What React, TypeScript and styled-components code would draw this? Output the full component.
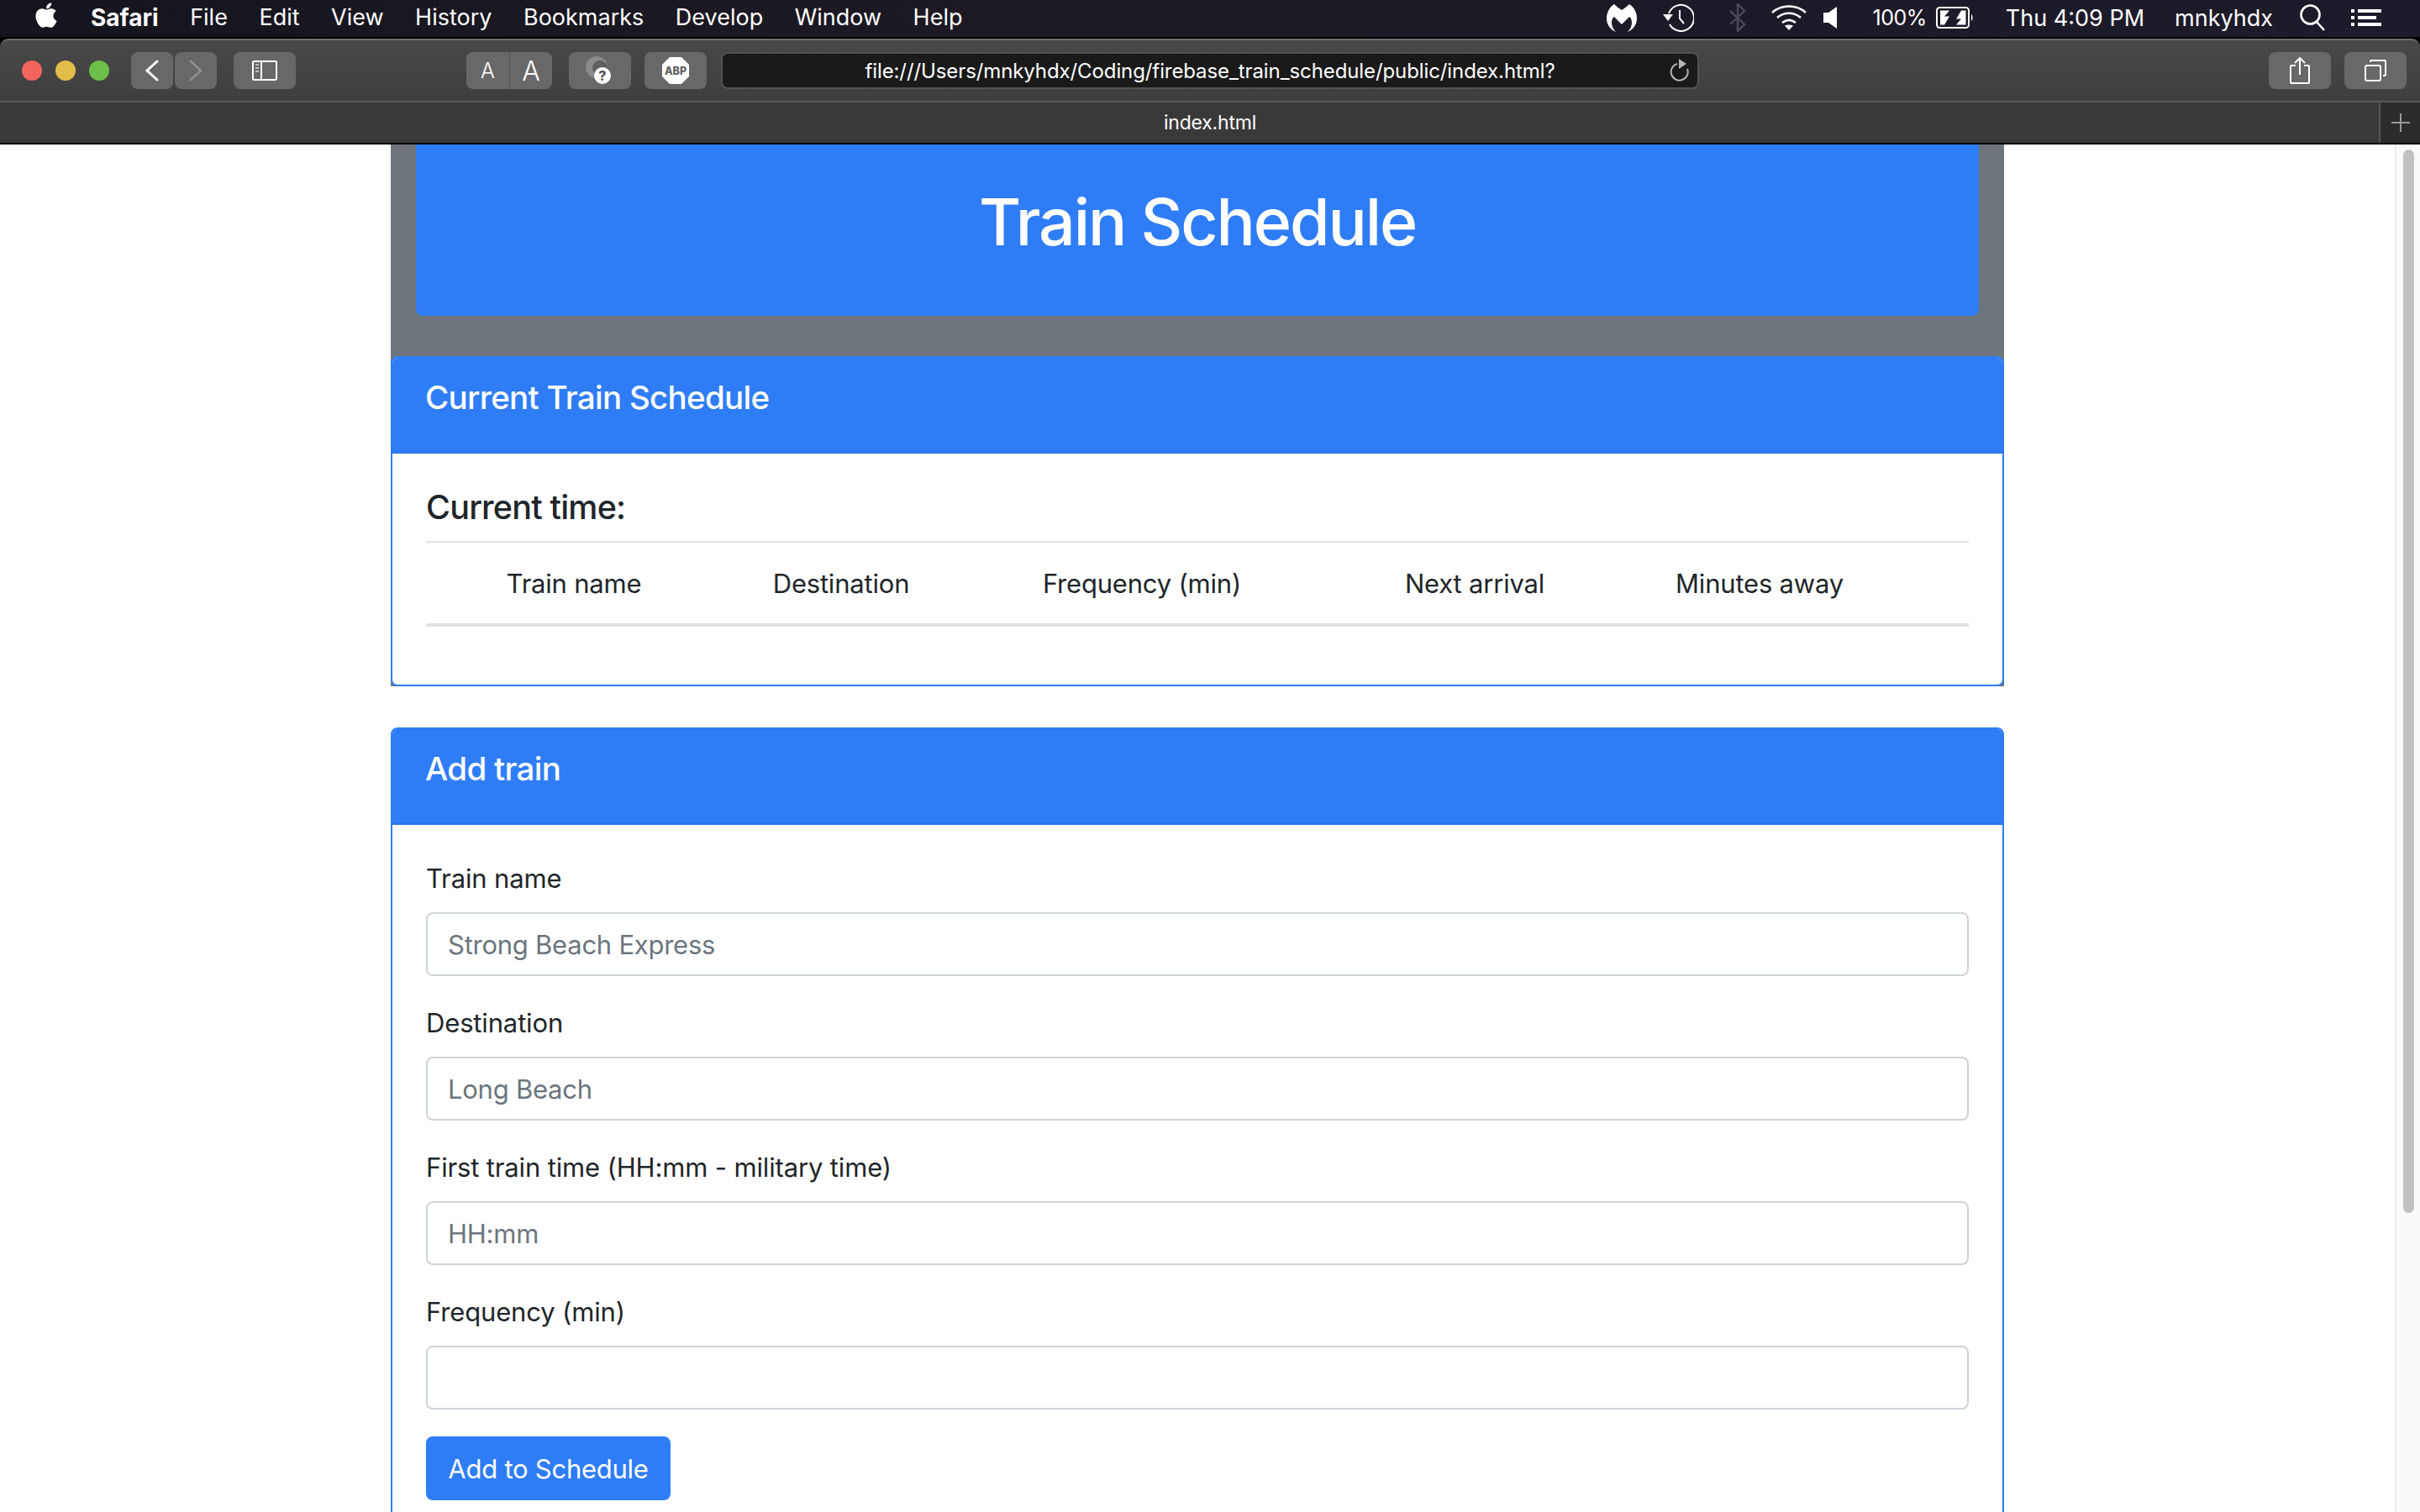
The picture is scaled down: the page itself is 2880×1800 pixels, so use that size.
import React from "react";
import styled, { createGlobalStyle } from "styled-components";
import { FaApple } from "react-icons/fa";

const GlobalStyle = createGlobalStyle`
  html, body {
    margin: 0;
    padding: 0;
    background: #fff;
    overflow: hidden;
  }
  * {
    box-sizing: border-box;
  }
`;

const Screen = styled.div`
  width: 2880px;
  height: 1800px;
  display: flex;
  flex-direction: column;
  overflow: hidden;
  font-family: Inter, "Liberation Sans", sans-serif;
  color: #212529;
  background: #000;
`;

/* mac menu bar */
const MenuBar = styled.div`
  height: 46px;
  flex: none;
  display: flex;
  align-items: center;
  padding: 0 46px 2px 42px;
  color: #fff;
  font-size: 27px;
  background: linear-gradient(90deg, #15151d, #1e1a24 45%, #1c1b2b);
  border-bottom: 2px solid #000;
`;

const AppleMark = styled(FaApple)`
  width: 30px;
  height: 34px;
  margin: -6px 38px 0 -2px;
`;

const MenuList = styled.div`
  display: flex;
  gap: 37.5px;
`;

const MenuItem = styled.span<{ $bold?: boolean }>`
  font-weight: ${(p) => (p.$bold ? 700 : 400)};
  font-size: ${(p) => (p.$bold ? "28px" : "inherit")};
`;

const StatusArea = styled.div`
  margin-left: auto;
  display: flex;
  align-items: center;
`;

const StatusSlot = styled.div<{ $ml?: number; $dim?: boolean }>`
  display: flex;
  align-items: center;
  margin-left: ${(p) => p.$ml ?? 0}px;
  color: ${(p) => (p.$dim ? "#4b4b57" : "#fff")};
  white-space: nowrap;
`;

const BatteryLevel = styled(StatusSlot)`
  font-size: 25px;
  letter-spacing: -0.5px;
`;

/* safari chrome */
const Toolbar = styled.div`
  height: 76px;
  flex: none;
  display: flex;
  align-items: center;
  padding: 0 16px 0 26px;
  border-top: 2px solid #6d6d6d;
  border-bottom: 2px solid #595858;
  border-radius: 10px 10px 0 0;
  background: linear-gradient(#494848, #403f3f);
`;

const Lights = styled.div`
  display: flex;
  gap: 16px;
  margin-right: 26px;
`;

const Light = styled.span<{ $color: string }>`
  width: 24px;
  height: 24px;
  border-radius: 50%;
  background: ${(p) => p.$color};
`;

const ToolButton = styled.button<{ $w: number; $ml?: number }>`
  width: ${(p) => p.$w}px;
  height: 44px;
  flex: none;
  margin-left: ${(p) => p.$ml ?? 0}px;
  padding: 0;
  display: flex;
  align-items: center;
  justify-content: center;
  border: none;
  border-radius: 8px;
  background: #696868;
  color: #fff;
`;

const FontButtons = styled.div`
  width: 102px;
  height: 44px;
  flex: none;
  margin-left: 203px;
  display: grid;
  grid-template-columns: 51px 51px;
  border-radius: 8px;
  overflow: hidden;
  background: #696868;
  color: #fff;
  font-weight: 300;
`;

const FontButton = styled.span<{ $size: number; $divided?: boolean }>`
  display: flex;
  align-items: center;
  justify-content: center;
  font-size: ${(p) => p.$size}px;
  border-left: ${(p) => (p.$divided ? "1px solid #535252" : "none")};
`;

const AddressBar = styled.div`
  width: 1164px;
  height: 44px;
  flex: none;
  margin-left: 17px;
  position: relative;
  display: flex;
  align-items: center;
  justify-content: center;
  border: 2px solid #535252;
  border-radius: 8px;
  background: #1a1a1a;
  color: #fff;
  font-size: 24px;
  letter-spacing: -0.1px;
`;

const Reload = styled.svg`
  position: absolute;
  right: 9px;
  top: 6px;
`;

const RightTools = styled.div`
  margin-left: auto;
  display: flex;
  gap: 16px;
`;

const TabBar = styled.div`
  height: 50px;
  flex: none;
  display: flex;
  border-bottom: 2px solid #000;
  background: #3a3939;
`;

const TabTitle = styled.div`
  flex: 1;
  display: flex;
  align-items: center;
  justify-content: center;
  padding-left: 49px;
  color: #fff;
  font-size: 23px;
  letter-spacing: -0.2px;
`;

const NewTab = styled.div`
  width: 49px;
  display: flex;
  align-items: center;
  justify-content: center;
  border-left: 2px solid #555;
  background: #2c2c2c;
`;

/* page */
const Viewport = styled.div`
  flex: 1;
  min-height: 0;
  display: flex;
  background: #fff;
`;

const PageArea = styled.div`
  flex: 1;
  min-width: 0;
  display: flex;
  flex-direction: column;
  align-items: center;
`;

const ScrollTrack = styled.div`
  width: 30px;
  flex: none;
  padding: 6px 7px 0 8px;
  border-left: 2px solid #ececec;
  background: #fafafa;
`;

const ScrollThumb = styled.div`
  height: 1266px;
  border-radius: 8px;
  background: #c1c1c1;
`;

const Container = styled.div`
  width: 1920px;
`;

const GreyPanel = styled.div`
  background: #6e757d;
`;

const Jumbotron = styled.div`
  height: 204px;
  margin: 0 30px 48px 30px;
  padding-top: 46px;
  border-radius: 0 0 8px 8px;
  background: #2f7df6;
  color: #fff;
  font-size: 77px;
  font-weight: 500;
  letter-spacing: -2.1px;
  line-height: 1.2;
  text-align: center;
`;

const Card = styled.section`
  border: 2px solid #2f7df6;
  border-radius: 8px;
  overflow: hidden;
  background: #fff;
`;

const CardHeader = styled.h4`
  height: 114px;
  margin: 0;
  padding: 24px 39px 0;
  border-bottom: 2px solid #2b74e6;
  background: #2f7df6;
  color: #fff;
  font-size: 38.500px;
  font-weight: 500;
  letter-spacing: -0.7px;
  line-height: 1.2;
`;

const CardBody = styled.div<{ $h?: number }>`
  padding: 40px;
  ${(p) => (p.$h ? `height: ${p.$h}px;` : "")}
`;

const TimeHeading = styled.h5`
  margin: 0 0 16px;
  font-size: 39.500px;
  font-weight: 500;
  letter-spacing: -0.8px;
  line-height: 48px;
`;

const TableHead = styled.div`
  display: grid;
  grid-template-columns: 352px 284px 432px 360px 318px;
  height: 102px;
  align-items: center;
  padding-top: 2px;
  border-top: 2px solid #dee2e6;
  border-bottom: 4px solid #dee2e6;
`;

const HeadCell = styled.div`
  text-align: center;
  font-size: 31px;
  letter-spacing: -0.2px;
  line-height: 48px;
`;

const AddCard = styled(Card)`
  margin-top: 49px;
`;

const FormGroup = styled.div`
  margin-bottom: 32px;
`;

const FieldLabel = styled.label`
  display: block;
  margin-bottom: 16px;
  font-size: 31px;
  letter-spacing: -0.15px;
  line-height: 48px;
`;

const TextInput = styled.input`
  display: block;
  width: 100%;
  height: 76px;
  padding: 0 24px;
  border: 2px solid #ced4da;
  border-radius: 8px;
  background: #fff;
  color: #495057;
  font-family: inherit;
  font-size: 31px;
  letter-spacing: -0.25px;
  outline: none;

  &::placeholder {
    color: #6c757d;
    opacity: 1;
  }
`;

const SubmitButton = styled.button`
  display: block;
  width: 291px;
  height: 76px;
  padding: 0;
  border: none;
  border-radius: 8px;
  background: #2f7df6;
  color: #fff;
  font-family: inherit;
  font-size: 31px;
  letter-spacing: -0.25px;
`;

const MalwareIcon = () => (
  <svg width="36" height="34" viewBox="0 0 36 34">
    <path
      fill="#fff"
      d="M9 1C3 5 0 11 0 18c0 7 4 13 11 16-3-3-5-7-5-11 0-3 1-6 3-7l9 9 9-9c2 1 3 4 3 7 0 4-2 8-5 11 7-3 11-9 11-16 0-7-3-13-9-17-3 3-6 5-9 7-3-2-6-4-9-7z"
    />
  </svg>
);

const TimeMachineIcon = () => (
  <svg width="38" height="34" viewBox="0 0 38 34" fill="none" stroke="#fff" strokeWidth="2">
    <path d="M8 12a15.5 15.5 0 1 1 1 13" />
    <path d="M21 8v10l5 6" />
    <path d="M1 13h12l-6 8z" fill="#fff" stroke="none" />
  </svg>
);

const BluetoothIcon = () => (
  <svg width="20" height="34" viewBox="0 0 20 34" fill="none" stroke="#4b4b57" strokeWidth="2.4">
    <path d="M1 9l17 16-8 8V1l8 8L1 25" />
  </svg>
);

const WifiIcon = () => (
  <svg width="42" height="30" viewBox="0 0 42 30" fill="none" stroke="#fff" strokeWidth="2.6">
    <path d="M1 9C12-1 30-1 41 9" />
    <path d="M7 15c8-7 20-7 28 0" />
    <path d="M13 21c5-4 11-4 16 0" />
    <path d="M16 24.5c3-1.500 7-1.500 10 0L21 30z" fill="#fff" stroke="none" />
  </svg>
);

const SpeakerIcon = () => (
  <svg width="16" height="26" viewBox="0 0 16 26">
    <path fill="#fff" d="M0 7h6l10-7v26L6 19H0z" />
  </svg>
);

const BatteryIcon = () => (
  <svg width="45" height="26" viewBox="0 0 45 26" fill="none">
    <rect x="1" y="1" width="38" height="24" rx="3.500" stroke="#fff" strokeWidth="2" />
    <path d="M5 4.500h11l-6 7h6l-6 10H5z" fill="#fff" />
    <path d="M21 4.500h14.500v17H24l6-7h-6l6-10z" fill="#fff" />
    <path d="M42 9c2 1 2 7 0 8z" fill="#fff" />
  </svg>
);

const SearchIcon = () => (
  <svg width="30" height="32" viewBox="0 0 30 32" fill="none" stroke="#fff" strokeWidth="2.6">
    <circle cx="12.500" cy="12.500" r="11" />
    <path d="M20 21l9 10" />
  </svg>
);

const ListIcon = () => (
  <svg width="36" height="20" viewBox="0 0 36 20" fill="#fff">
    <rect x="0" y="0" width="4" height="4" />
    <rect x="8" y="0" width="28" height="4" />
    <rect x="0" y="8" width="4" height="4" />
    <rect x="8" y="8" width="22" height="4" />
    <rect x="0" y="16" width="4" height="4" />
    <rect x="8" y="16" width="28" height="4" />
  </svg>
);

const ChevronIcon = ({ dir, color }: { dir: "left" | "right"; color: string }) => (
  <svg width="16" height="26" viewBox="0 0 16 26" fill="none" stroke={color} strokeWidth="3" strokeLinecap="round">
    <path d={dir === "left" ? "M14 2L2 13l12 11" : "M2 2l12 11L2 24"} />
  </svg>
);

const SidebarIcon = () => (
  <svg width="30" height="24" viewBox="0 0 30 24" fill="none" stroke="#fff" strokeWidth="2">
    <rect x="1" y="1" width="28" height="22" rx="1.500" />
    <path d="M11 1v22" />
    <path d="M4 5h4M4 9h4M4 13h4" stroke="#bdbdbd" strokeWidth="2" />
  </svg>
);

const GhosteryIcon = () => (
  <svg width="36" height="36" viewBox="0 0 36 36">
    <circle cx="14" cy="14" r="13" fill="#8a8a8a" />
    <circle cx="18" cy="15" r="9" fill="#5f5f5f" />
    <circle cx="21" cy="24" r="10" fill="#fff" />
    <text x="21" y="30" textAnchor="middle" fontSize="16" fontWeight="800" fontFamily="Inter, sans-serif" fill="#555">
      ?
    </text>
  </svg>
);

const AbpIcon = () => (
  <svg width="34" height="34" viewBox="0 0 34 34">
    <path fill="#fff" d="M10 1h14l9 9v14l-9 9H10l-9-9V10z" />
    <text x="17" y="22" textAnchor="middle" fontSize="12.500" fontWeight="800" fontFamily="Inter, sans-serif" fill="#5f5f5f">
      ABP
    </text>
  </svg>
);

const ShareIcon = () => (
  <svg width="24" height="32" viewBox="0 0 24 32" fill="none" stroke="#fff" strokeWidth="2">
    <path d="M7 10H2a1 1 0 0 0-1 1v19a1 1 0 0 0 1 1h20a1 1 0 0 0 1-1V11a1 1 0 0 0-1-1h-5" />
    <path d="M12 21V1M6 7l6-6 6 6" />
  </svg>
);

const TabsIcon = () => (
  <svg width="26" height="26" viewBox="0 0 26 26" fill="none" stroke="#fff" strokeWidth="2">
    <rect x="1" y="7" width="18" height="18" rx="2" />
    <path d="M7 3V2a1 1 0 0 1 1-1h16a1 1 0 0 1 1 1v16a1 1 0 0 1-1 1h-2" />
  </svg>
);

const menuItems = ["File", "Edit", "View", "History", "Bookmarks", "Develop", "Window", "Help"];
const columns = ["Train name", "Destination", "Frequency (min)", "Next arrival", "Minutes away"];
const fields = [
  { label: "Train name", placeholder: "Strong Beach Express" },
  { label: "Destination", placeholder: "Long Beach" },
  { label: "First train time (HH:mm - military time)", placeholder: "HH:mm" },
  { label: "Frequency (min)", placeholder: "" },
];

const App: React.FC = () => {
  return (
    <Screen>
      <GlobalStyle />
      <MenuBar>
        <AppleMark />
        <MenuList>
          <MenuItem $bold>Safari</MenuItem>
          {menuItems.map((item) => (
            <MenuItem key={item}>{item}</MenuItem>
          ))}
        </MenuList>
        <StatusArea>
          <StatusSlot><MalwareIcon /></StatusSlot>
          <StatusSlot $ml={30}><TimeMachineIcon /></StatusSlot>
          <StatusSlot $ml={42} $dim><BluetoothIcon /></StatusSlot>
          <StatusSlot $ml={30}><WifiIcon /></StatusSlot>
          <StatusSlot $ml={20}><SpeakerIcon /></StatusSlot>
          <BatteryLevel $ml={43}>100%</BatteryLevel>
          <StatusSlot $ml={11}><BatteryIcon /></StatusSlot>
          <StatusSlot $ml={38}>Thu 4:09 PM</StatusSlot>
          <StatusSlot $ml={36}>mnkyhdx</StatusSlot>
          <StatusSlot $ml={32}><SearchIcon /></StatusSlot>
          <StatusSlot $ml={31}><ListIcon /></StatusSlot>
        </StatusArea>
      </MenuBar>

      <Toolbar>
        <Lights>
          <Light $color="#f2645c" />
          <Light $color="#e2bd49" />
          <Light $color="#6cbf47" />
        </Lights>
        <ToolButton $w={50}><ChevronIcon dir="left" color="#fff" /></ToolButton>
        <ToolButton $w={50} $ml={2}><ChevronIcon dir="right" color="#8e8e8e" /></ToolButton>
        <ToolButton $w={74} $ml={20}><SidebarIcon /></ToolButton>
        <FontButtons>
          <FontButton $size={25}>A</FontButton>
          <FontButton $size={32} $divided>A</FontButton>
        </FontButtons>
        <ToolButton $w={74} $ml={20}><GhosteryIcon /></ToolButton>
        <ToolButton $w={74} $ml={16}><AbpIcon /></ToolButton>
        <AddressBar>
          file:///Users/mnkyhdx/Coding/firebase_train_schedule/public/index.html?
          <Reload width="24" height="28" viewBox="0 0 24 28" fill="none" stroke="#b5b5b5" strokeWidth="2">
            <path d="M9 6a10 10 0 1 0 12 6" />
            <path d="M11 0l9 6-9 6z" fill="#b5b5b5" stroke="none" />
          </Reload>
        </AddressBar>
        <RightTools>
          <ToolButton $w={74}><ShareIcon /></ToolButton>
          <ToolButton $w={74}><TabsIcon /></ToolButton>
        </RightTools>
      </Toolbar>

      <TabBar>
        <TabTitle>index.html</TabTitle>
        <NewTab>
          <svg width="22" height="22" viewBox="0 0 22 22" stroke="#9a9a9a" strokeWidth="2">
            <path d="M11 0v22M0 11h22" />
          </svg>
        </NewTab>
      </TabBar>

      <Viewport>
        <PageArea>
          <Container>
            <GreyPanel>
              <Jumbotron>Train Schedule</Jumbotron>
              <Card>
                <CardHeader>Current Train Schedule</CardHeader>
                <CardBody $h={275}>
                  <TimeHeading>Current time:</TimeHeading>
                  <TableHead>
                    {columns.map((col) => (
                      <HeadCell key={col}>{col}</HeadCell>
                    ))}
                  </TableHead>
                </CardBody>
              </Card>
            </GreyPanel>
            <AddCard>
              <CardHeader>Add train</CardHeader>
              <CardBody>
                {fields.map((field) => (
                  <FormGroup key={field.label}>
                    <FieldLabel>{field.label}</FieldLabel>
                    <TextInput placeholder={field.placeholder} />
                  </FormGroup>
                ))}
                <SubmitButton>Add to Schedule</SubmitButton>
              </CardBody>
            </AddCard>
          </Container>
        </PageArea>
        <ScrollTrack>
          <ScrollThumb />
        </ScrollTrack>
      </Viewport>
    </Screen>
  );
};

export default App;
